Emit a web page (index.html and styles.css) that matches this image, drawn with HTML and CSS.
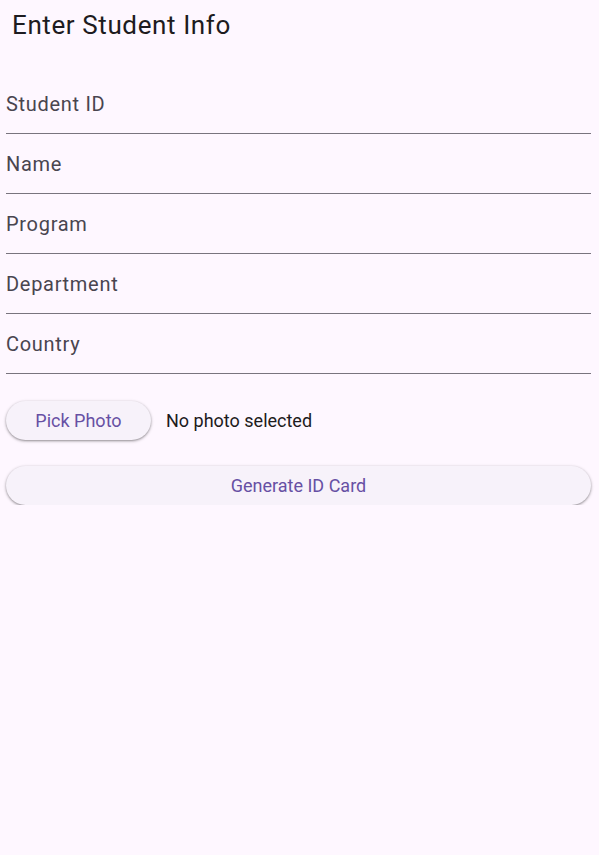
FILE: index.html
```html
<!DOCTYPE html>
<html>
<head>
<meta charset="utf-8">
<link rel="stylesheet" href="styles.css">
</head>
<body>
<div class="page">
  <h1 class="title">Enter Student Info</h1>
  <div class="form">
    <div class="field"><span class="label">Student ID</span></div>
    <div class="field"><span class="label">Name</span></div>
    <div class="field"><span class="label">Program</span></div>
    <div class="field"><span class="label">Department</span></div>
    <div class="field"><span class="label">Country</span></div>
  </div>
  <div class="photo-row">
    <button class="btn btn-pick">Pick Photo</button>
    <span class="photo-status">No photo selected</span>
  </div>
  <button class="btn btn-wide">Generate ID Card</button>
</div>
</body>
</html>
```
FILE: styles.css
```css
html, body {
  margin: 0;
  padding: 0;
  background: #fef7ff;
  font-family: Roboto, "Noto Sans", sans-serif;
}
.page {
  padding: 0 8px 0 6px;
}
.title {
  margin: 0;
  padding: 10px 0 0 6px;
  height: 42px;
  font-size: 26px;
  letter-spacing: 0.6px;
  font-weight: 400;
  color: #1d1b20;
  line-height: 30px;
}
.form {
  margin-top: 22px;
}
.field {
  height: 59px;
  border-bottom: 1px solid #79747e;
  display: flex;
  align-items: center;
}
.label {
  font-size: 20px;
  letter-spacing: 0.7px;
  color: #49454f;
  margin-top: 1px;
}
.photo-row {
  display: flex;
  align-items: center;
  gap: 15px;
  margin-top: 27px;
}
.btn {
  border: none;
  border-radius: 20px;
  background: #f7f2fa;
  color: #6750a4;
  font-family: Roboto, "Noto Sans", sans-serif;
  font-size: 18px;
  height: 39px;
  box-shadow: 0 1px 2px rgba(0,0,0,0.3), 0 1px 3px 1px rgba(0,0,0,0.12);
  cursor: pointer;
}
.btn-pick {
  width: 145px;
  padding: 0;
}
.photo-status {
  font-size: 18px;
  color: #1d1b20;
}
.btn-wide {
  display: block;
  width: 100%;
  margin-top: 26px;
}
```
